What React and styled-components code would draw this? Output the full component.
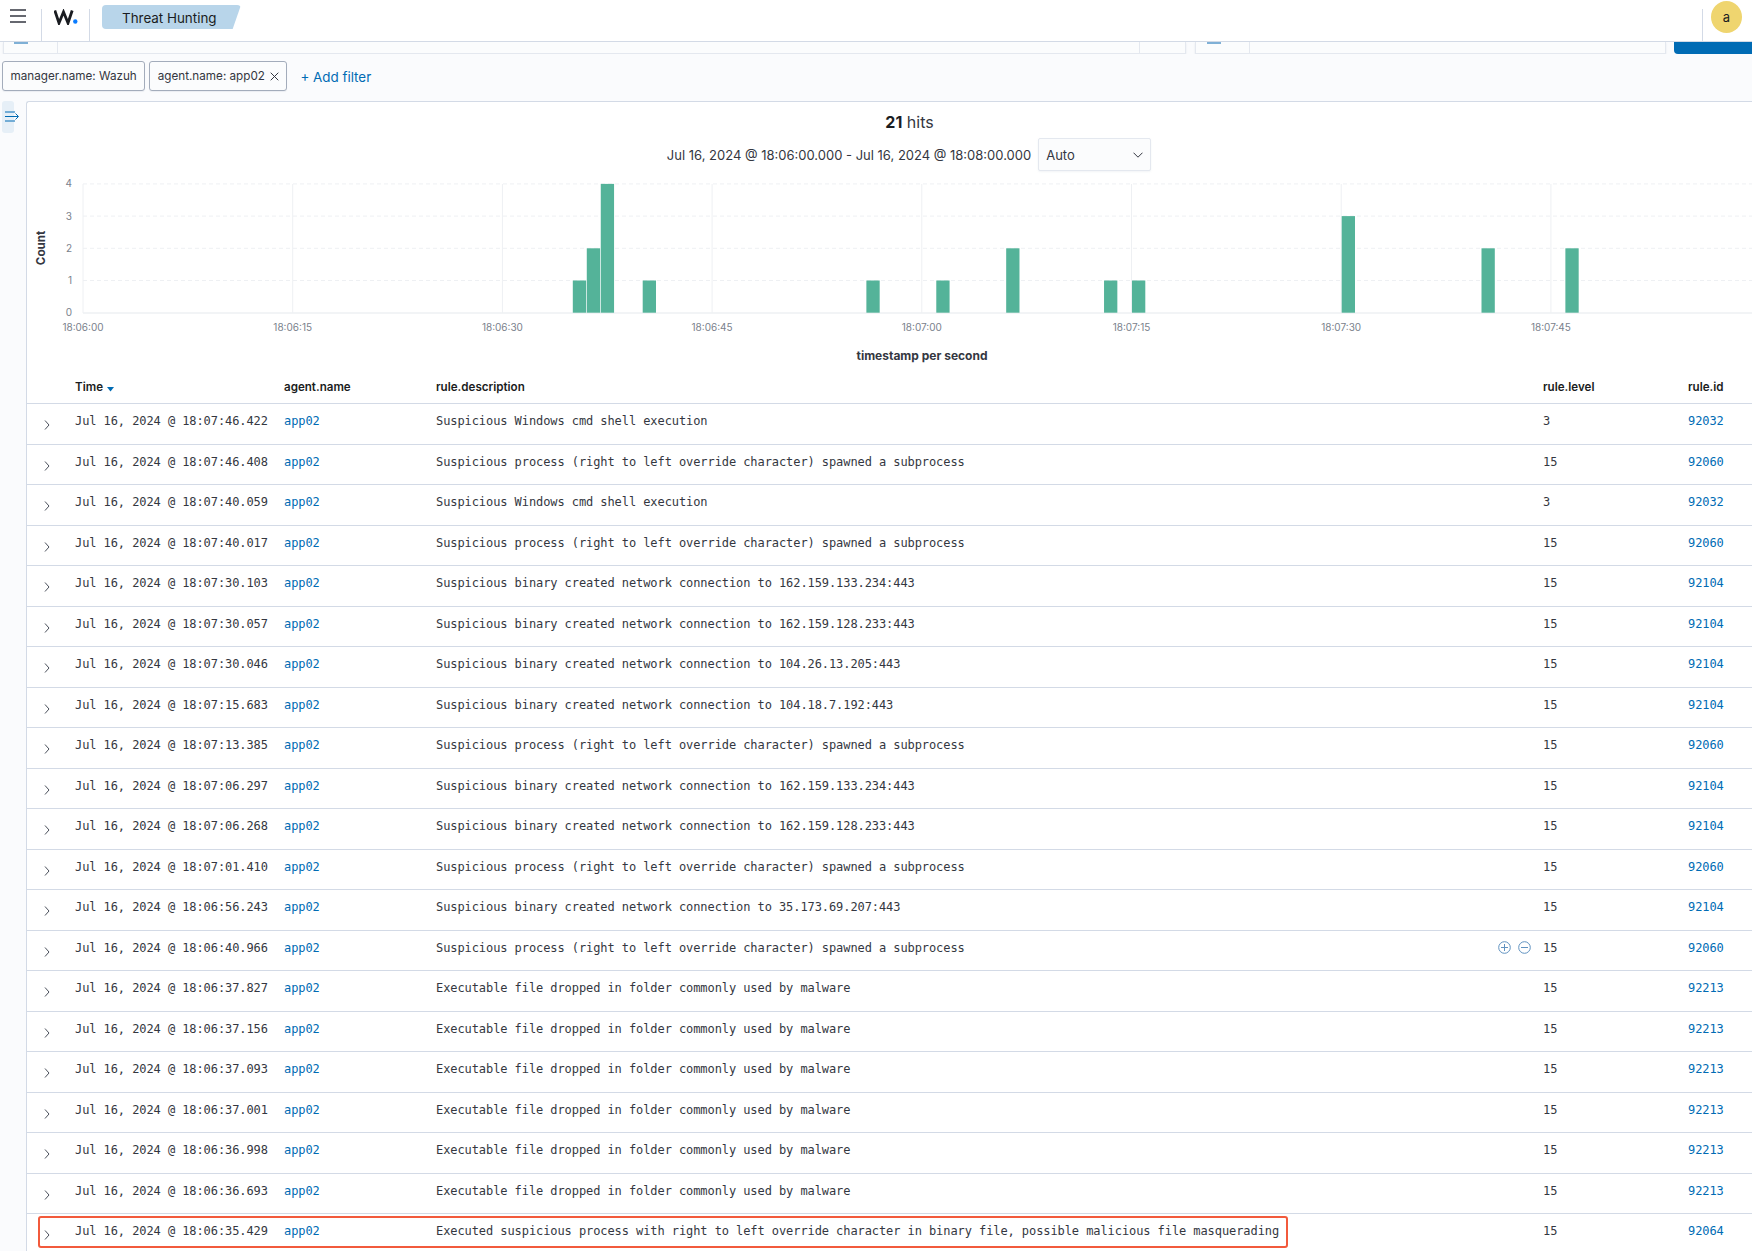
import React from 'react';
import styled, { createGlobalStyle } from 'styled-components';

const GlobalStyle = createGlobalStyle`
  html, body {
    margin: 0;
    padding: 0;
    height: 100%;
    background: #fafbfd;
    font-family: Inter, "Liberation Sans", sans-serif;
    color: #343741;
  }
  * { box-sizing: border-box; }
`;

const Page = styled.div`
  width: 1752px;
  height: 1251px;
  display: flex;
  flex-direction: column;
  overflow: hidden;
  background: #fafbfd;
`;

const TopBar = styled.header`
  height: 42px;
  flex: none;
  display: flex;
  align-items: stretch;
  background: #fff;
  border-bottom: 1px solid #d3dae6;
`;

const MenuCell = styled.div`
  width: 41px;
  padding: 9px 0 0 10px;
  display: flex;
  flex-direction: column;
  justify-content: flex-start;
`;

const LogoCell = styled.div`
  width: 49px;
  margin-top: 9px;
  border-left: 1px solid #d3dae6;
  border-right: 1px solid #d3dae6;
  padding: 0 0 0 12px;
`;

const Crumb = styled.div`
  width: 139px;
  height: 24px;
  margin: 5px 0 0 12px;
  padding: 1px 0 0 20px;
  background: #b8d5ea;
  border-radius: 4px;
  clip-path: polygon(0 0, 100% 0, 94% 100%, 0 100%);
  font-size: 13.4px;
  line-height: 24px;
  color: #1a1c21;
`;

const TopBarRight = styled.div`
  margin-left: auto;
  width: 50px;
  margin-top: 9px;
  border-left: 1px solid #d3dae6;
`;

const Avatar = styled.div`
  width: 31px;
  height: 32px;
  margin: -8px 0 0 8px;
  border-radius: 50%;
  background: #efd56f;
  color: #1a1c21;
  font-size: 13px;
  line-height: 32px;
  text-align: center;
`;

const QueryBar = styled.div`
  height: 12px;
  flex: none;
  display: flex;
  padding-left: 3px;
  overflow: hidden;
`;

const QueryBox = styled.div`
  width: ${(p) => p.$width}px;
  margin-right: ${(p) => p.$gap}px;
  height: 12px;
  display: flex;
  background: #fbfcfd;
  border: 1px solid #e4e8ef;
  border-top: none;
  box-shadow: 0 1px 2px rgba(152, 162, 179, 0.2);
`;

const QueryPrefix = styled.div`
  width: ${(p) => p.$width}px;
  flex: none;
  border-right: 1px solid #e4e8ef;
  padding-left: ${(p) => p.$iconAt}px;
`;

const QueryIconEdge = styled.div`
  width: 14px;
  height: 2px;
  background: #7fb0d6;
`;

const QuerySpacer = styled.div`
  flex: 1;
`;

const QueryEnd = styled.div`
  width: 46px;
  flex: none;
  border-left: 1px solid #e4e8ef;
`;

const UpdateButton = styled.div`
  flex: 1;
  height: 12px;
  background: #006bb4;
  border-bottom-left-radius: 4px;
`;

const FilterRow = styled.div`
  height: 47px;
  flex: none;
  display: flex;
  align-items: flex-start;
  padding: 7px 0 0 2px;
  gap: 4px;
`;

const FilterChip = styled.div`
  height: 30px;
  display: flex;
  align-items: center;
  gap: 5px;
  padding: 0 7.5px;
  background: #fbfcfd;
  border: 1px solid #a3acbb;
  border-radius: 3px;
  font-size: 11.7px;
  color: #343741;
  white-space: nowrap;
  box-shadow: 0 1px 1px rgba(152, 162, 179, 0.15);
`;

const AddFilter = styled.div`
  margin: 7px 0 0 9px;
  font-size: 13.4px;
  line-height: 18px;
  color: #006bb4;
`;

const Main = styled.div`
  flex: 1;
  min-height: 0;
  display: flex;
`;

const SideColumn = styled.div`
  width: 26px;
  flex: none;
  padding-left: 2px;
`;

const SideToggle = styled.div`
  width: 12px;
  height: 32px;
  padding: 10px 0 0 3px;
  background: #e6eff7;
  border-radius: 3px;
`;

const Panel = styled.main`
  flex: 1;
  min-width: 0;
  background: #fff;
  border-left: 1px solid #d3dae6;
  border-top: 1px solid #d3dae6;
  border-top-left-radius: 3px;
  position: relative;
`;

const HitsTitle = styled.div`
  height: 36px;
  padding: 9px 0 0 40px;
  text-align: center;
  font-size: 16px;
  line-height: 22px;
  color: #343741;
  b { font-weight: 700; color: #1a1c21; }
`;

const RangeRow = styled.div`
  height: 33px;
  padding-left: 39px;
  display: flex;
  justify-content: center;
  align-items: center;
  gap: 7px;
  font-size: 13px;
  color: #343741;
`;

const IntervalSelect = styled.div`
  width: 113px;
  height: 33px;
  padding: 0 7px 0 7px;
  display: flex;
  align-items: center;
  justify-content: space-between;
  background: #fbfcfd;
  border: 1px solid #e4e8ef;
  border-radius: 2px;
  box-shadow: 0 1px 2px rgba(152, 162, 179, 0.12);
`;

const ChartBox = styled.svg`
  display: block;
  width: 1725px;
  height: 198px;
  margin-top: 2px;
  font-family: Inter, "Liberation Sans", sans-serif;
`;

const TableRow = styled.div`
  display: grid;
  grid-template-columns: 48px 209px 152px 1107px 145px 1fr;
`;

const HeadRow = styled(TableRow)`
  height: 33px;
  padding-top: 8px;
  border-bottom: 1px solid #d3dae6;
  font-size: 11.6px;
  font-weight: 600;
  line-height: 16px;
  color: #1a1c21;
`;

const SortCell = styled.div`
  display: flex;
  align-items: center;
  gap: 4px;
  height: 16px;
`;

const DataRow = styled(TableRow)`
  height: 40.5px;
  padding-top: 9px;
  border-bottom: 1px solid #d3dae6;
  font-family: "DejaVu Sans Mono", "Liberation Mono", monospace;
  font-size: 12px;
  letter-spacing: -0.08px;
  line-height: 16px;
  color: #343741;
  white-space: pre;
`;

const ExpandCell = styled.div`
  padding: 7px 0 0 17px;
`;

const LinkText = styled.div`
  color: #006bb4;
`;

const DescCell = styled.div`
  display: flex;
  justify-content: space-between;
  padding-right: 12px;
`;

const CellActions = styled.div`
  display: flex;
  gap: 7px;
  align-items: center;
  height: 16px;
`;

const Highlight = styled.div`
  position: absolute;
  left: 11px;
  top: 1114px;
  width: 1250px;
  height: 32px;
  border: 2px solid #f25a3c;
  border-radius: 3px;
  pointer-events: none;
`;

const rows = [
  ['18:07:46.422', 'cmd', 3, 92032],
  ['18:07:46.408', 'rlo', 15, 92060],
  ['18:07:40.059', 'cmd', 3, 92032],
  ['18:07:40.017', 'rlo', 15, 92060],
  ['18:07:30.103', 'net:162.159.133.234:443', 15, 92104],
  ['18:07:30.057', 'net:162.159.128.233:443', 15, 92104],
  ['18:07:30.046', 'net:104.26.13.205:443', 15, 92104],
  ['18:07:15.683', 'net:104.18.7.192:443', 15, 92104],
  ['18:07:13.385', 'rlo', 15, 92060],
  ['18:07:06.297', 'net:162.159.133.234:443', 15, 92104],
  ['18:07:06.268', 'net:162.159.128.233:443', 15, 92104],
  ['18:07:01.410', 'rlo', 15, 92060],
  ['18:06:56.243', 'net:35.173.69.207:443', 15, 92104],
  ['18:06:40.966', 'rlo', 15, 92060],
  ['18:06:37.827', 'drop', 15, 92213],
  ['18:06:37.156', 'drop', 15, 92213],
  ['18:06:37.093', 'drop', 15, 92213],
  ['18:06:37.001', 'drop', 15, 92213],
  ['18:06:36.998', 'drop', 15, 92213],
  ['18:06:36.693', 'drop', 15, 92213],
  ['18:06:35.429', 'masq', 15, 92064],
];

const describe = (kind) => {
  if (kind === 'cmd') return 'Suspicious Windows cmd shell execution';
  if (kind === 'rlo') return 'Suspicious process (right to left override character) spawned a subprocess';
  if (kind === 'drop') return 'Executable file dropped in folder commonly used by malware';
  if (kind === 'masq') return 'Executed suspicious process with right to left override character in binary file, possible malicious file masquerading';
  return `Suspicious binary created network connection to ${kind.slice(4)}`;
};

// seconds after 18:06:00 and hit count
const bars = [
  [35, 1], [36, 2], [37, 4], [40, 1], [56, 1], [61, 1],
  [66, 2], [73, 1], [75, 1], [90, 3], [100, 2], [106, 2],
];

const ticks = ['18:06:00', '18:06:15', '18:06:30', '18:06:45', '18:07:00', '18:07:15', '18:07:30', '18:07:45'];

const xOf = (sec) => 83 + sec * 13.98;
const yOf = (count) => 311.7 - count * 32.2;

const Histogram = () => (
  <ChartBox viewBox="27 172 1725 198">
    {[1, 2, 3, 4].map((c) => (
      <line key={c} x1="83" x2="1752" y1={yOf(c)} y2={yOf(c)} stroke="#eef0f3" strokeDasharray="4 3" />
    ))}
    {ticks.map((t, i) => (
      <line key={t} x1={xOf(i * 15)} x2={xOf(i * 15)} y1="183" y2="312" stroke="#eef0f3" />
    ))}
    <line x1="83" x2="1752" y1="312" y2="312" stroke="#eef0f3" strokeWidth="1.5" />
    {bars.map(([s, c]) => (
      <rect key={s} x={xOf(s) + 0.5} y={yOf(c)} width="13.3" height={c * 32.2} fill="#54b399" />
    ))}
    {[0, 1, 2, 3, 4].map((c) => (
      <text key={c} x="72" y={yOf(c) + 3.5} fontSize="10" fill="#7a818c" textAnchor="end">{c}</text>
    ))}
    {ticks.map((t, i) => (
      <text key={t} x={xOf(i * 15)} y="330" fontSize="10" fill="#7a818c" textAnchor="middle">{t}</text>
    ))}
    <text x="41" y="251" fontSize="11.6" fontWeight="700" fill="#343741" textAnchor="middle" transform="rotate(-90 41 247)">Count</text>
    <text x="922" y="359" fontSize="12" fontWeight="700" fill="#343741" textAnchor="middle">timestamp per second</text>
  </ChartBox>
);

const MenuIcon = () => (
  <svg width="16" height="14" viewBox="0 0 16 14">
    <path d="M0 2h16M0 8h16M0 14h16" transform="translate(0 -1)" stroke="#343741" strokeWidth="1.6" fill="none" />
  </svg>
);

const LogoMark = () => (
  <svg width="24" height="16" viewBox="0 0 24 16">
    <path d="M.8 1.500L5 14 9.500 3l4.500 11L18.200 1.500" stroke="#1a1c21" strokeWidth="2.8" fill="none" strokeLinejoin="miter" />
    <circle cx="21.300" cy="12.500" r="2.200" fill="#0a7cff" />
  </svg>
);

const CloseIcon = () => (
  <svg width="9" height="9" viewBox="0 0 9 9">
    <path d="M.7.7l7.6 7.6M8.3.7L.7 8.3" stroke="#343741" strokeWidth="1" fill="none" />
  </svg>
);

const ToggleIcon = () => (
  <svg width="15" height="11" viewBox="0 0 15 11" style={{ display: 'block' }}>
    <path d="M0 1h10M0 5.500h13M0 10h10M10.500 2.500l3 3-3 3" stroke="#006bb4" strokeWidth="1" fill="none" />
  </svg>
);

const ChevronDown = () => (
  <svg width="10" height="6" viewBox="0 0 10 6">
    <path d="M.5.700L5 5.200 9.500.700" stroke="#343741" strokeWidth="1" fill="none" />
  </svg>
);

const SortIcon = () => (
  <svg width="7" height="5" viewBox="0 0 7 5" style={{ marginTop: 4 }}>
    <path d="M0 0h7L3.500 4.500z" fill="#006bb4" />
  </svg>
);

const ExpandIcon = () => (
  <svg width="6" height="10" viewBox="0 0 6 10" style={{ display: 'block' }}>
    <path d="M1 .5L5 5 1 9.500" stroke="#4a4f5a" strokeWidth="1" fill="none" />
  </svg>
);

const FilterIcon = ({ plus }) => (
  <svg width="13" height="13" viewBox="0 0 13 13">
    <circle cx="6.500" cy="6.500" r="5.800" stroke="#6092c0" fill="none" />
    <path d={plus ? 'M3 6.500h7M6.500 3v7' : 'M3 6.500h7'} stroke="#6092c0" fill="none" />
  </svg>
);

const App = () => (
  <Page>
    <GlobalStyle />
    <TopBar>
      <MenuCell><MenuIcon /></MenuCell>
      <LogoCell><LogoMark /></LogoCell>
      <Crumb>Threat Hunting</Crumb>
      <TopBarRight><Avatar>a</Avatar></TopBarRight>
    </TopBar>
    <QueryBar>
      <QueryBox $width={1183} $gap={9}>
        <QueryPrefix $width={54} $iconAt={10}><QueryIconEdge /></QueryPrefix>
        <QuerySpacer />
        <QueryEnd />
      </QueryBox>
      <QueryBox $width={471} $gap={8}>
        <QueryPrefix $width={54} $iconAt={11}><QueryIconEdge /></QueryPrefix>
        <QuerySpacer />
      </QueryBox>
      <UpdateButton />
    </QueryBar>
    <FilterRow>
      <FilterChip>manager.name: Wazuh</FilterChip>
      <FilterChip>agent.name: app02 <CloseIcon /></FilterChip>
      <AddFilter>+ Add filter</AddFilter>
    </FilterRow>
    <Main>
      <SideColumn>
        <SideToggle><ToggleIcon /></SideToggle>
      </SideColumn>
      <Panel>
        <HitsTitle><b>21</b> hits</HitsTitle>
        <RangeRow>
          Jul 16, 2024 @ 18:06:00.000 - Jul 16, 2024 @ 18:08:00.000
          <IntervalSelect>Auto <ChevronDown /></IntervalSelect>
        </RangeRow>
        <Histogram />
        <HeadRow>
          <div />
          <SortCell>Time <SortIcon /></SortCell>
          <div>agent.name</div>
          <div>rule.description</div>
          <div>rule.level</div>
          <div>rule.id</div>
        </HeadRow>
        {rows.map(([time, kind, level, id]) => (
          <DataRow key={time}>
            <ExpandCell><ExpandIcon /></ExpandCell>
            <div>Jul 16, 2024 @ {time}</div>
            <LinkText>app02</LinkText>
            <DescCell>
              {describe(kind)}
              {time === '18:06:40.966' && (
                <CellActions>
                  <FilterIcon plus />
                  <FilterIcon />
                </CellActions>
              )}
            </DescCell>
            <div>{level}</div>
            <LinkText>{id}</LinkText>
          </DataRow>
        ))}
        <Highlight />
      </Panel>
    </Main>
  </Page>
);

export default App;
